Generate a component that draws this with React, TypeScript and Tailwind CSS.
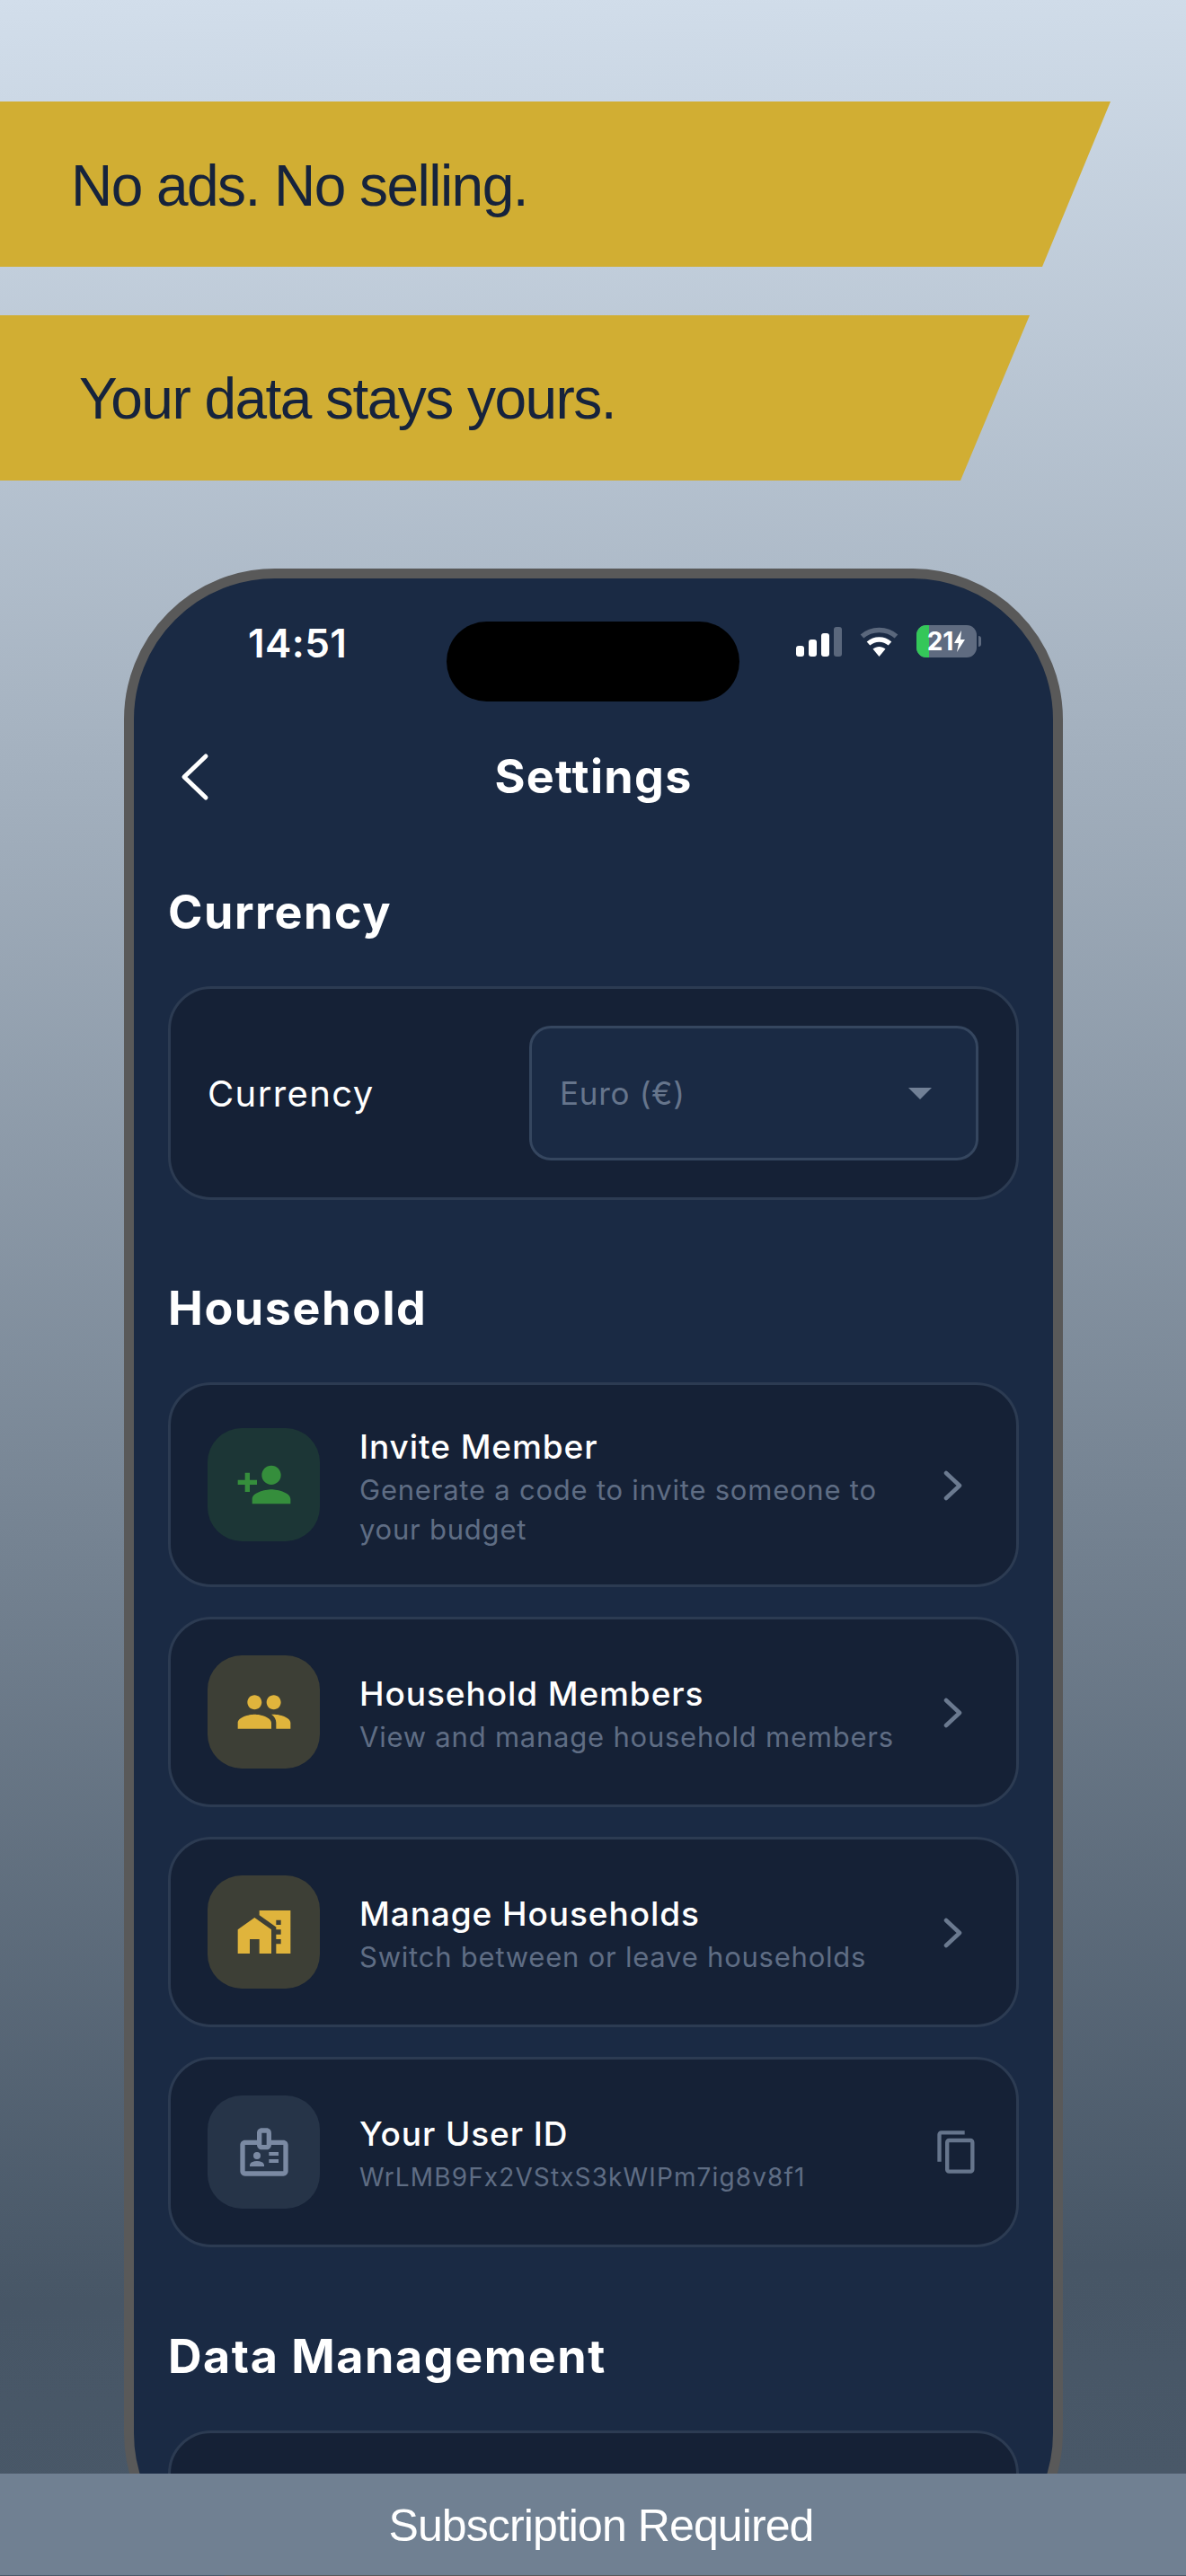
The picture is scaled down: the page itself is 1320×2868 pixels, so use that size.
import type { ReactNode } from "react";
import { MdContentCopy, MdHomeWork, MdOutlineBadge, MdPeople, MdPersonAdd } from "react-icons/md";

function Chevron({ className }: { className: string }) {
  return (
    <svg width="24" height="34" viewBox="0 0 24 34" fill="none" className={className}>
      <path d="M4 3l15 14L4 31" stroke="currentColor" strokeWidth="4.5" strokeLinecap="round" strokeLinejoin="round" />
    </svg>
  );
}

function StatusIcons() {
  return (
    <div className="flex items-center">
      {/* signal */}
      <div className="flex h-[33px] items-end gap-[5px]">
        <div className="h-[12px] w-[9px] rounded-[3px] bg-white" />
        <div className="h-[19px] w-[9px] rounded-[3px] bg-white" />
        <div className="h-[26px] w-[9px] rounded-[3px] bg-white" />
        <div className="h-[33px] w-[9px] rounded-[3px] bg-[#5a677c]" />
      </div>
      {/* wifi */}
      <svg width="43" height="33" viewBox="0 0 43 33" fill="none" className="ml-[20px]">
        <path d="M2.5 10.5C13 1 30 1 40.5 10.5" stroke="#5a677c" strokeWidth="5.5" />
        <path d="M9.5 18.5C16.5 12.5 26.5 12.5 33.5 18.5" stroke="#fff" strokeWidth="5.5" />
        <path d="M14.5 24.5C18.5 21 24.5 21 28.5 24.5L21.5 33z" fill="#fff" />
      </svg>
      {/* battery */}
      <div className="relative ml-[20px] flex h-[36px] w-[67px] items-center justify-center overflow-hidden rounded-[11px] bg-[#5f6b80]">
        <div className="absolute inset-y-0 left-0 w-[14px] bg-[#34c759]" />
        <span className="relative text-[28px] leading-none font-bold text-white">21</span>
        <svg width="14" height="24" viewBox="0 0 14 24" className="relative">
          <path d="M9 0L1 14h5l-2 10 9-14H8z" fill="#fff" />
        </svg>
      </div>
      <div className="ml-[2px] h-[12px] w-[3px] rounded-r-full bg-[#5f6b80]" />
    </div>
  );
}

function Card({
  icon,
  iconBox,
  title,
  trailing,
  tall,
  children,
}: {
  icon: ReactNode;
  iconBox: string;
  title: string;
  trailing: ReactNode;
  tall?: boolean;
  children: ReactNode;
}) {
  return (
    <div
      className={`flex items-center rounded-[48px] border-[3px] border-[#2c3b52] bg-[#152136] pl-[41px] ${
        tall ? "h-[228px]" : "h-[212px]"
      }`}
    >
      <div className={`flex h-[126px] w-[125px] shrink-0 items-center justify-center rounded-[38px] ${iconBox}`}>
        {icon}
      </div>
      <div className="ml-[44px] w-[610px] pt-[4px]">
        <p className="text-[37px] leading-[52px] font-medium tracking-[0.025em] text-white">{title}</p>
        {children}
      </div>
      <div className="ml-auto">{trailing}</div>
    </div>
  );
}

const SUB = "text-[31px] leading-[44px] tracking-[0.025em] text-[#5f6d84]";
const HEADING = "mb-[52px] text-[52px] leading-[60px] font-bold tracking-[0.03em] text-white";

export default function App() {
  const arrow = <Chevron className="mt-[2px] mr-[58px] text-[#6b7a90]" />;

  return (
    <div className="relative h-[2868px] overflow-hidden bg-[linear-gradient(178deg,#d2deeb,#475666_88%,#4a5969)] font-['Inter',sans-serif]">
      {/* promo banners */}
      <div className="pt-[113px] font-['Liberation_Sans',sans-serif] text-[64px] tracking-[-0.024em] text-[#16233c]">
        <div className="flex h-[184px] w-[1236px] items-center bg-[#d1ae33] pt-[4px] pl-[79px] [clip-path:polygon(0_0,100%_0,1160px_100%,0_100%)]">
          No ads. No selling.
        </div>
        <div className="mt-[54px] flex h-[184px] w-[1146px] items-center bg-[#d1ae33] pt-[2px] pl-[88px] [clip-path:polygon(0_0,100%_0,1069px_100%,0_100%)]">
          Your data stays yours.
        </div>
      </div>

      {/* phone */}
      <div className="mt-[98px] ml-[138px] h-[2244px] w-[1045px] overflow-hidden rounded-[168px] border-[11px] border-[#595959] bg-[#1a2a44]">
        <div className="grid grid-cols-[348px_326px_1fr] pt-[48px]">
          <div className="pt-[2px] pl-[127px] text-[44px] leading-[44px] font-semibold tracking-[0.01em] text-white">14:51</div>
          <div className="h-[89px] rounded-full bg-black" />
          <div className="pt-[4px] pl-[63px]">
            <StatusIcons />
          </div>
        </div>

        <div className="mt-[42px] grid h-[84px] grid-cols-[1fr_auto_1fr] items-center">
          <svg width="34" height="54" viewBox="0 0 34 54" fill="none" className="ml-[50px]">
            <path d="M30 4L6 27l24 23" stroke="#fff" strokeWidth="5" strokeLinecap="round" strokeLinejoin="round" />
          </svg>
          <h1 className="text-[52px] font-bold tracking-[0.025em] text-white">Settings</h1>
        </div>

        <div className="px-[38px]">
          <h2 className={`mt-[79px] ${HEADING}`}>Currency</h2>
          <div className="flex h-[238px] items-center rounded-[48px] border-[3px] border-[#2c3b52] bg-[#152136] pl-[41px]">
            <span className="pt-[2px] text-[40px] tracking-[0.035em] text-white">Currency</span>
            <div className="mr-[42px] ml-auto flex h-[150px] w-[500px] items-center justify-between rounded-[24px] border-[3px] border-[#35465f] bg-[#1a2a44] pr-[49px] pl-[31px]">
              <span className="text-[35px] tracking-[0.02em] text-[#66758c]">Euro (€)</span>
              <div className="h-0 w-0 border-x-[13px] border-t-[13px] border-x-transparent border-t-[#718096]" />
            </div>
          </div>

          <h2 className={`mt-[91px] ${HEADING}`}>Household</h2>
          <div className="flex flex-col gap-[33px]">
            <Card
              tall
              title="Invite Member"
              iconBox="bg-[#1c3636]"
              icon={<MdPersonAdd size={64} className="text-[#358e3c]" />}
              trailing={arrow}
            >
              <p className={SUB}>Generate a code to invite someone to your budget</p>
            </Card>
            <Card
              title="Household Members"
              iconBox="bg-[#3d3f36]"
              icon={<MdPeople size={64} className="text-[#e0b43c]" />}
              trailing={arrow}
            >
              <p className={SUB}>View and manage household members</p>
            </Card>
            <Card
              title="Manage Households"
              iconBox="bg-[#3d3f36]"
              icon={<MdHomeWork size={64} className="text-[#e0b43c]" />}
              trailing={arrow}
            >
              <p className={SUB}>Switch between or leave households</p>
            </Card>
            <Card
              title="Your User ID"
              iconBox="bg-[#263448]"
              icon={<MdOutlineBadge size={64} className="text-[#7b8aa3]" />}
              trailing={<MdContentCopy size={52} className="mr-[40px] text-[#66758c]" />}
            >
              <p className="text-[28px] leading-[44px] tracking-[0.04em] text-[#5f6d84]">WrLMB9Fx2VStxS3kWIPm7ig8v8f1</p>
            </Card>
          </div>

          <h2 className={`mt-[92px] ${HEADING}`}>Data Management</h2>
          <div className="h-[212px] rounded-[48px] border-[3px] border-[#2c3b52] bg-[#152136]" />
        </div>
      </div>

      {/* subscription bar */}
      <div className="absolute inset-x-0 top-[2754px] flex h-[113px] items-center justify-center bg-[#708092] pt-[4px] pl-[18px] font-['Liberation_Sans',sans-serif] text-[50px] tracking-[-0.018em] text-white">
        Subscription Required
      </div>
    </div>
  );
}
